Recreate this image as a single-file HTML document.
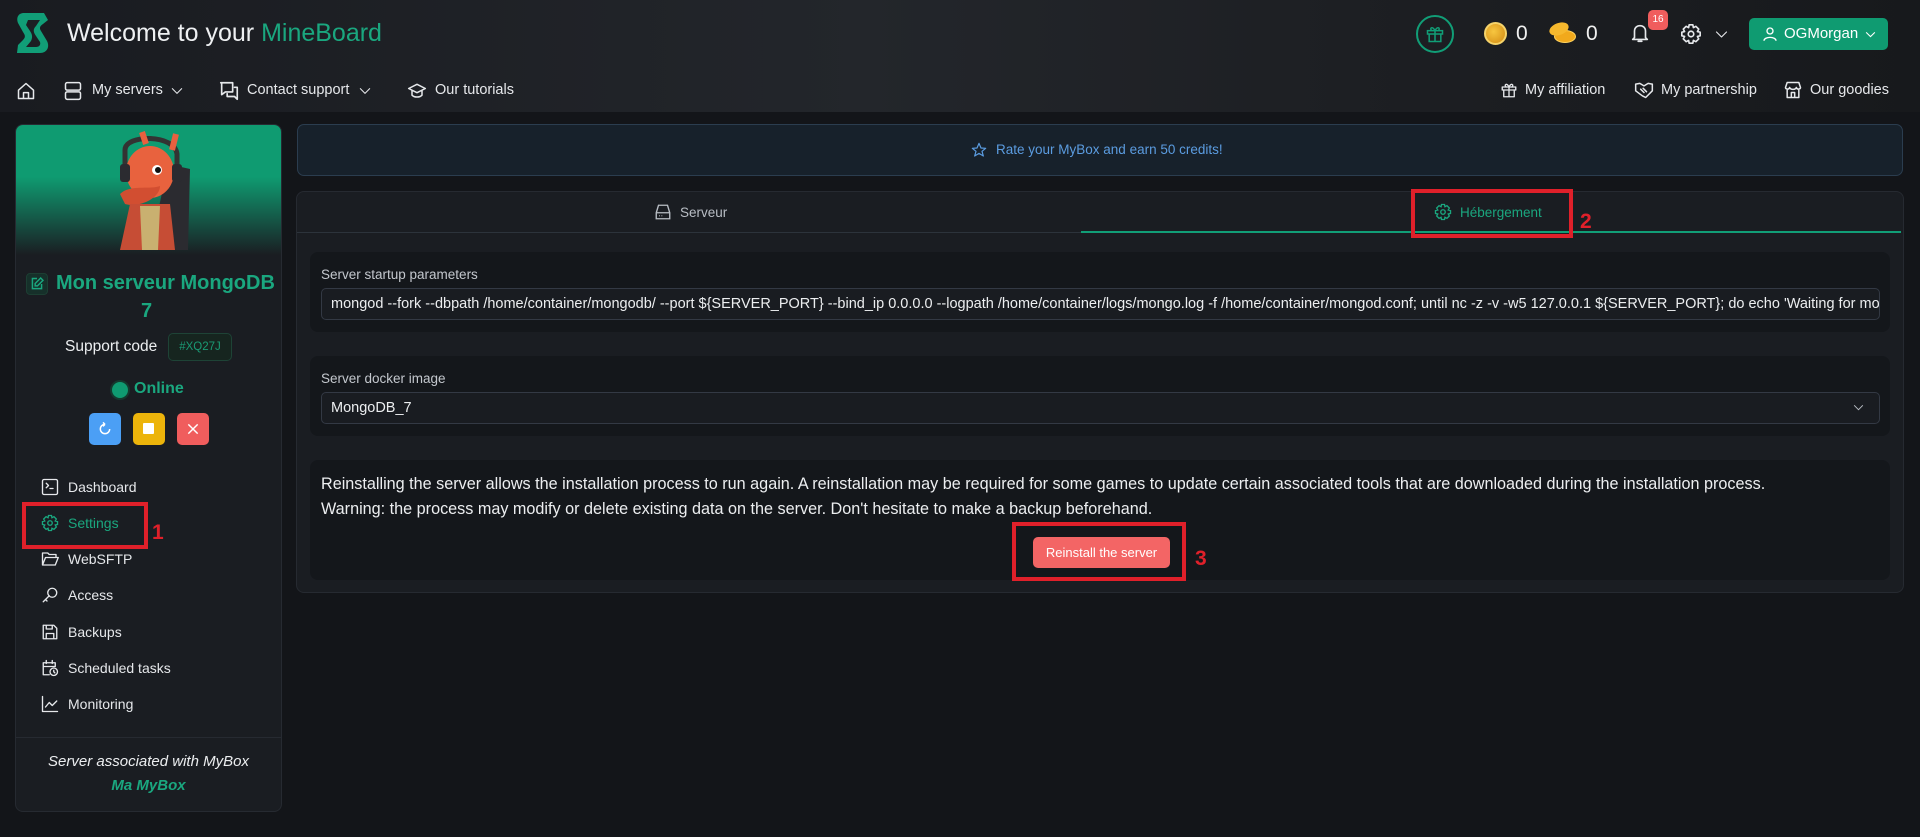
<!DOCTYPE html>
<html><head><meta charset="utf-8"><style>
*{box-sizing:border-box;margin:0;padding:0}
body{width:1920px;height:837px;background:#131519;font-family:"Liberation Sans",sans-serif;color:#e6e8eb;position:relative;overflow:hidden}
.abs{position:absolute}
.hdr{left:0;top:0;width:1920px;height:112px;background:linear-gradient(90deg,#191b20 0%,#23262b 45%,#1d1f23 70%,#17191c 100%)}
svg{display:block}
.ic{stroke:#e6e8eb;fill:none;stroke-width:1.8;stroke-linecap:round;stroke-linejoin:round}
.nav{font-size:14.5px;color:#e6e8eb}
.card{background:#1a1d22;border:1px solid #262a31;border-radius:8px}
.sec{background:#14171b;border-radius:8px}
.menu{font-size:14px;color:#e6e8eb}
.red{border:4px solid #e0202a}
.num{color:#e0202a;font-weight:bold;font-size:21px}
.inp{background:#191c21;border:1px solid #333944;border-radius:5px;font-size:14.5px;color:#eceef0;padding-left:9px;line-height:30px;white-space:nowrap;overflow:hidden}
.lbl{font-size:13.5px;color:#c4c8ce}
</style></head><body>
<div class="abs hdr"></div>
<svg class="abs" style="left:14px;top:10px" width="38" height="46" viewBox="0 0 38 46"><path d="M30 3 L10 3 C4 3 2 8 4 13 L9 22 C11 25 12 27 9 30 L4 35 L3 43 L26 43 C33 43 36 37 33 31 L27 21 C25 18 26 16 29 14 L34 10 Z" fill="#119e77"/><path d="M14 10 L26 10 L22 16 C19 19 19 22 22 26 L26 32 C27 35 25 37 22 37 L12 37 L17 31 C19 27 18 24 16 21 L12 15 Z" fill="#1c1f23"/></svg>
<div class="abs" style="left:67px;top:19px;font-size:25px;color:#eef0f2">Welcome to your <span style="color:#1aa77f">MineBoard</span></div>
<svg class="abs ic" style="left:16px;top:81px" width="20" height="20" viewBox="0 0 24 24"><path d="M3 11 L12 3 L21 11 V21 H3 Z M9 21 V14 H15 V21"/></svg>
<svg class="abs ic" style="left:63px;top:80px" width="20" height="22" viewBox="0 0 24 24"><rect x="3" y="2" width="18" height="9" rx="2"/><rect x="3" y="13" width="18" height="9" rx="2"/></svg>
<div class="abs nav" style="left:92px;top:82px">My servers</div>
<svg class="abs ic" style="left:170px;top:84px" width="14" height="14" viewBox="0 0 24 24"><path d="M4 8 L12 16 L20 8"/></svg>
<svg class="abs ic" style="left:218px;top:80px" width="22" height="22" viewBox="0 0 24 24"><path d="M3 3 H16 V13 H8 L4 16 V3 Z M18 8 H21 V21 L18 18 H10 V15"/></svg>
<div class="abs nav" style="left:247px;top:82px">Contact support</div>
<svg class="abs ic" style="left:358px;top:84px" width="14" height="14" viewBox="0 0 24 24"><path d="M4 8 L12 16 L20 8"/></svg>
<svg class="abs ic" style="left:407px;top:81px" width="20" height="20" viewBox="0 0 24 24"><path d="M2 9 L12 4 L22 9 L12 14 Z M6 11 V17 C9 20 15 20 18 17 V11"/></svg>
<div class="abs nav" style="left:435px;top:82px">Our tutorials</div>
<div class="abs" style="left:1416px;top:15px;width:38px;height:38px;border:2px solid #119e77;border-radius:50%"></div>
<svg class="abs" style="left:1425px;top:24px;stroke:#119e77;fill:none;stroke-width:1.8" width="20" height="20" viewBox="0 0 24 24"><rect x="3" y="8" width="18" height="4"/><path d="M5 12 V21 H19 V12 M12 8 V21 M12 8 C9 2 5 5 8 8 M12 8 C15 2 19 5 16 8"/></svg>
<div class="abs" style="left:1484px;top:22px;width:23px;height:23px;border-radius:50%;background:radial-gradient(circle at 40% 40%,#f7c640,#d28a12);border:2px solid #f5d36a"></div>
<div class="abs" style="left:1516px;top:22px;font-size:21px;color:#f0f0f0">0</div>
<div class="abs" style="left:1554px;top:30px;width:22px;height:13px;border-radius:50%;background:#f1a91c;border:1px solid #ffd460"></div>
<div class="abs" style="left:1549px;top:23px;width:20px;height:12px;border-radius:50%;background:#f6b82d;transform:rotate(-20deg)"></div>
<div class="abs" style="left:1586px;top:22px;font-size:21px;color:#f0f0f0">0</div>
<svg class="abs ic" style="left:1629px;top:21px" width="22" height="24" viewBox="0 0 24 24"><path d="M6 17 V10 C6 6 9 4 12 4 C15 4 18 6 18 10 V17 L20 19 H4 Z M10 21 H14"/></svg>
<div class="abs" style="left:1648px;top:10px;width:20px;height:20px;border-radius:5px;background:#f05d5d;font-size:10px;color:#fff;text-align:center;line-height:20px">16</div>
<svg class="abs ic" style="left:1680px;top:23px" width="22" height="22" viewBox="0 0 24 24"><circle cx="12" cy="12" r="3"/><path d="M10 2 H14 L14.6 5 L17.3 3.6 L20.4 6.7 L19 9.4 L22 10 V14 L19 14.6 L20.4 17.3 L17.3 20.4 L14.6 19 L14 22 H10 L9.4 19 L6.7 20.4 L3.6 17.3 L5 14.6 L2 14 V10 L5 9.4 L3.6 6.7 L6.7 3.6 L9.4 5 Z"/></svg>
<svg class="abs ic" style="left:1714px;top:27px" width="15" height="15" viewBox="0 0 24 24"><path d="M4 8 L12 16 L20 8"/></svg>
<div class="abs" style="left:1749px;top:18px;width:139px;height:32px;background:#0f9b71;border-radius:5px"></div>
<svg class="abs" style="left:1761px;top:25px;stroke:#fff;fill:none;stroke-width:1.8" width="18" height="18" viewBox="0 0 24 24"><circle cx="12" cy="8" r="4"/><path d="M4 21 C4 15 20 15 20 21"/></svg>
<div class="abs" style="left:1784px;top:25px;font-size:15px;color:#fff">OGMorgan</div>
<svg class="abs" style="left:1864px;top:28px;stroke:#fff;fill:none;stroke-width:2" width="13" height="13" viewBox="0 0 24 24"><path d="M4 8 L12 16 L20 8"/></svg>
<svg class="abs ic" style="left:1500px;top:81px" width="18" height="18" viewBox="0 0 24 24"><rect x="3" y="8" width="18" height="4"/><path d="M5 12 V21 H19 V12 M12 8 V21 M12 8 C9 2 5 5 8 8 M12 8 C15 2 19 5 16 8"/></svg>
<div class="abs nav" style="left:1525px;top:82px">My affiliation</div>
<svg class="abs ic" style="left:1634px;top:80px" width="20" height="20" viewBox="0 0 24 24"><path d="M2 5 L7 4 L12 7 L17 4 L22 5 V13 L14 21 L10 19 L2 13 Z M8 11 L12 15 M11 10 L15 14"/></svg>
<div class="abs nav" style="left:1661px;top:82px">My partnership</div>
<svg class="abs ic" style="left:1783px;top:80px" width="20" height="20" viewBox="0 0 24 24"><path d="M3 9 L5 3 H19 L21 9 C21 11 17 12 16 9 C15 12 9 12 8 9 C7 12 3 11 3 9 Z M5 11 V21 H19 V11 M10 21 V15 H14 V21"/></svg>
<div class="abs nav" style="left:1810px;top:82px">Our goodies</div>

<div class="abs card" style="left:15px;top:124px;width:267px;height:688px;overflow:hidden">
 <div style="height:130px;background:linear-gradient(180deg,#0f9b71 0%,#0f9b71 40%,#1a1d22 100%)"></div>
</div>
<svg class="abs" style="left:80px;top:124px" width="130" height="126" viewBox="0 0 130 126">
 <path d="M88 40 L110 45 L108 126 L70 126 Z" fill="#2b2b30"/>
 <path d="M45 26 C45 10 95 10 97 30 L97 55 L45 55 Z" fill="none" stroke="#333" stroke-width="5"/>
 <path d="M62 8 L66 20 M96 10 L92 26" stroke="#e8603f" stroke-width="6"/>
 <ellipse cx="70" cy="48" rx="24" ry="26" fill="#e8623e"/>
 <path d="M40 70 C50 60 70 66 80 62 C80 74 60 84 45 80 Z" fill="#d24e31"/>
 <path d="M50 80 L90 80 L95 126 L40 126 Z" fill="#c64d35"/>
 <path d="M60 82 L80 82 L78 126 L62 126 Z" fill="#c9b070"/>
 <rect x="40" y="40" width="10" height="18" rx="3" fill="#2b2b30"/><rect x="92" y="40" width="10" height="18" rx="3" fill="#2b2b30"/>
 <circle cx="77" cy="46" r="5" fill="#fff"/><circle cx="78" cy="46" r="3" fill="#111"/>
</svg>
<svg class="abs" style="left:26px;top:273px" width="22" height="22" viewBox="0 0 24 24"><rect x="0.5" y="0.5" width="23" height="23" rx="4" fill="#16302a" stroke="#1d4034"/><path d="M12 6 H7 V17 H17 V12 M10 14 V11.5 L16 5.5 L18.5 8 L12.5 14 Z" stroke="#1aa77f" fill="none" stroke-width="1.6"/></svg>
<div class="abs" style="left:56px;top:272px;font-size:20px;color:#1aa77f;font-weight:bold">Mon serveur MongoDB</div>
<div class="abs" style="left:141px;top:300px;font-size:20px;color:#1aa77f;font-weight:bold">7</div>
<div class="abs" style="left:65px;top:338px;font-size:15.5px;color:#eceef0">Support code</div>
<div class="abs" style="left:168px;top:333px;width:64px;height:28px;border:1px solid #1e4336;background:#16251f;border-radius:5px;font-size:11.5px;color:#1a9a74;text-align:center;line-height:26px">#XQ27J</div>
<div class="abs" style="left:112px;top:382px;width:16px;height:16px;border-radius:50%;background:#0f9b71;box-shadow:0 0 0 2px #143a2e"></div>
<div class="abs" style="left:134px;top:380px;font-size:16px;color:#1aa77f;font-weight:bold">Online</div>
<div class="abs" style="left:89px;top:413px;width:32px;height:32px;border-radius:5px;background:#4b9ff5"></div>
<svg class="abs" style="left:97px;top:421px;stroke:#fff;fill:none;stroke-width:2.2" width="16" height="16" viewBox="0 0 24 24"><path d="M19 12 A7 7 0 1 1 12 5 M12 5 L9 2 M12 5 L9 8"/></svg>
<div class="abs" style="left:133px;top:413px;width:32px;height:32px;border-radius:5px;background:#ecb40b"></div>
<div class="abs" style="left:143px;top:423px;width:11px;height:11px;background:#fff;border-radius:1px"></div>
<div class="abs" style="left:177px;top:413px;width:32px;height:32px;border-radius:5px;background:#f05d5d"></div>
<svg class="abs" style="left:185px;top:421px;stroke:#fff;stroke-width:2.2" width="16" height="16" viewBox="0 0 24 24"><path d="M5 5 L19 19 M19 5 L5 19"/></svg>
<svg class="abs ic" style="left:41px;top:478px" width="18" height="18" viewBox="0 0 24 24"><rect x="2" y="2" width="20" height="20" rx="2"/><path d="M7 7 L10 10 L7 13 M12 14 H16"/></svg>
<div class="abs menu" style="left:68px;top:479px">Dashboard</div>
<svg class="abs" style="left:41px;top:514px;stroke:#1aa77f;fill:none;stroke-width:1.8" width="18" height="18" viewBox="0 0 24 24"><circle cx="12" cy="12" r="3"/><path d="M10 2 H14 L14.6 5 L17.3 3.6 L20.4 6.7 L19 9.4 L22 10 V14 L19 14.6 L20.4 17.3 L17.3 20.4 L14.6 19 L14 22 H10 L9.4 19 L6.7 20.4 L3.6 17.3 L5 14.6 L2 14 V10 L5 9.4 L3.6 6.7 L6.7 3.6 L9.4 5 Z"/></svg>
<div class="abs menu" style="left:68px;top:515px;color:#1aa77f">Settings</div>
<svg class="abs ic" style="left:41px;top:550px" width="18" height="18" viewBox="0 0 24 24"><path d="M2 20 V4 H9 L11 6 H20 V9 M2 20 L6 10 H23 L19 20 Z"/></svg>
<div class="abs menu" style="left:68px;top:551px">WebSFTP</div>
<svg class="abs ic" style="left:41px;top:586px" width="18" height="18" viewBox="0 0 24 24"><circle cx="15" cy="9" r="6"/><path d="M11 13 L3 21 M6 18 L8 20"/></svg>
<div class="abs menu" style="left:68px;top:587px">Access</div>
<svg class="abs ic" style="left:41px;top:623px" width="18" height="18" viewBox="0 0 24 24"><path d="M3 3 H17 L21 7 V21 H3 Z M7 3 V8 H15 V3 M7 21 V14 H17 V21"/></svg>
<div class="abs menu" style="left:68px;top:624px">Backups</div>
<svg class="abs ic" style="left:41px;top:659px" width="18" height="18" viewBox="0 0 24 24"><path d="M11 21 H3 V5 H19 V10 M3 10 H19 M7 2 V6 M15 2 V6"/><circle cx="17" cy="17" r="5"/><path d="M17 15 V17 L18.5 18.5"/></svg>
<div class="abs menu" style="left:68px;top:660px">Scheduled tasks</div>
<svg class="abs ic" style="left:41px;top:695px" width="18" height="18" viewBox="0 0 24 24"><path d="M2 2 V22 H22 M6 16 L11 10 L15 14 L21 8"/></svg>
<div class="abs menu" style="left:68px;top:696px">Monitoring</div>
<div class="abs" style="left:16px;top:737px;width:265px;height:1px;background:#262a31"></div>
<div class="abs" style="left:16px;top:753px;width:265px;text-align:center;font-size:15px;font-style:italic;color:#eceef0">Server associated with MyBox</div>
<div class="abs" style="left:16px;top:777px;width:265px;text-align:center;font-size:15px;font-style:italic;font-weight:bold;color:#1aa77f">Ma MyBox</div>
<div class="abs red" style="left:22px;top:502px;width:126px;height:47px"></div>
<div class="abs num" style="left:152px;top:521px">1</div>

<div class="abs" style="left:297px;top:124px;width:1606px;height:52px;background:#17212b;border:1px solid #2b3d4f;border-radius:7px"></div>
<svg class="abs" style="left:971px;top:142px;stroke:#5b9ce0;fill:none;stroke-width:1.8;stroke-linejoin:round" width="16" height="16" viewBox="0 0 24 24"><path d="M12 2 L15 9 L22 9.5 L16.5 14 L18.5 21 L12 17 L5.5 21 L7.5 14 L2 9.5 L9 9 Z"/></svg>
<div class="abs" style="left:996px;top:142px;font-size:13.5px;color:#5b9ce0">Rate your MyBox and earn 50 credits!</div>

<div class="abs card" style="left:296px;top:191px;width:1608px;height:402px"></div>
<div class="abs" style="left:297px;top:232px;width:784px;height:1px;background:#2c333b"></div>
<div class="abs" style="left:1081px;top:231px;width:820px;height:2px;background:#119e77"></div>
<svg class="abs" style="left:654px;top:203px;stroke:#b9bec5;fill:none;stroke-width:1.8" width="18" height="18" viewBox="0 0 24 24"><path d="M3 13 L6 3 H18 L21 13 V21 H3 Z M3 13 H21 M7 17 H8 M10 17 H11"/></svg>
<div class="abs" style="left:680px;top:205px;font-size:13.5px;color:#b9bec5">Serveur</div>
<svg class="abs" style="left:1434px;top:203px;stroke:#1aa77f;fill:none;stroke-width:1.8" width="18" height="18" viewBox="0 0 24 24"><circle cx="12" cy="12" r="3"/><path d="M10 2 H14 L14.6 5 L17.3 3.6 L20.4 6.7 L19 9.4 L22 10 V14 L19 14.6 L20.4 17.3 L17.3 20.4 L14.6 19 L14 22 H10 L9.4 19 L6.7 20.4 L3.6 17.3 L5 14.6 L2 14 V10 L5 9.4 L3.6 6.7 L6.7 3.6 L9.4 5 Z"/></svg>
<div class="abs" style="left:1460px;top:205px;font-size:13.5px;color:#1aa77f">Hébergement</div>
<div class="abs red" style="left:1411px;top:189px;width:162px;height:49px"></div>
<div class="abs num" style="left:1580px;top:210px">2</div>

<div class="abs sec" style="left:310px;top:252px;width:1580px;height:80px"></div>
<div class="abs lbl" style="left:321px;top:267px">Server startup parameters</div>
<div class="abs inp" style="left:321px;top:288px;width:1559px;height:32px">mongod --fork --dbpath /home/container/mongodb/ --port ${SERVER_PORT} --bind_ip 0.0.0.0 --logpath /home/container/logs/mongo.log -f /home/container/mongod.conf; until nc -z -v -w5 127.0.0.1 ${SERVER_PORT}; do echo 'Waiting for mongodb connection...'; sleep 5; done</div>

<div class="abs sec" style="left:310px;top:356px;width:1580px;height:80px"></div>
<div class="abs lbl" style="left:321px;top:371px">Server docker image</div>
<div class="abs inp" style="left:321px;top:392px;width:1559px;height:32px">MongoDB_7</div>
<svg class="abs" style="left:1852px;top:401px;stroke:#b9bec5;fill:none;stroke-width:1.8" width="13" height="13" viewBox="0 0 24 24"><path d="M4 8 L12 16 L20 8"/></svg>

<div class="abs sec" style="left:310px;top:460px;width:1580px;height:120px"></div>
<div class="abs" style="left:321px;top:472px;font-size:16.2px;color:#eceef0;line-height:25px">Reinstalling the server allows the installation process to run again. A reinstallation may be required for some games to update certain associated tools that are downloaded during the installation process.<br>Warning: the process may modify or delete existing data on the server. Don't hesitate to make a backup beforehand.</div>
<div class="abs" style="left:1033px;top:537px;width:137px;height:31px;background:#f36565;border-radius:5px;font-size:13px;color:#fff;text-align:center;line-height:31px">Reinstall the server</div>
<div class="abs red" style="left:1012px;top:522px;width:174px;height:59px"></div>
<div class="abs num" style="left:1195px;top:547px">3</div>
</body></html>
